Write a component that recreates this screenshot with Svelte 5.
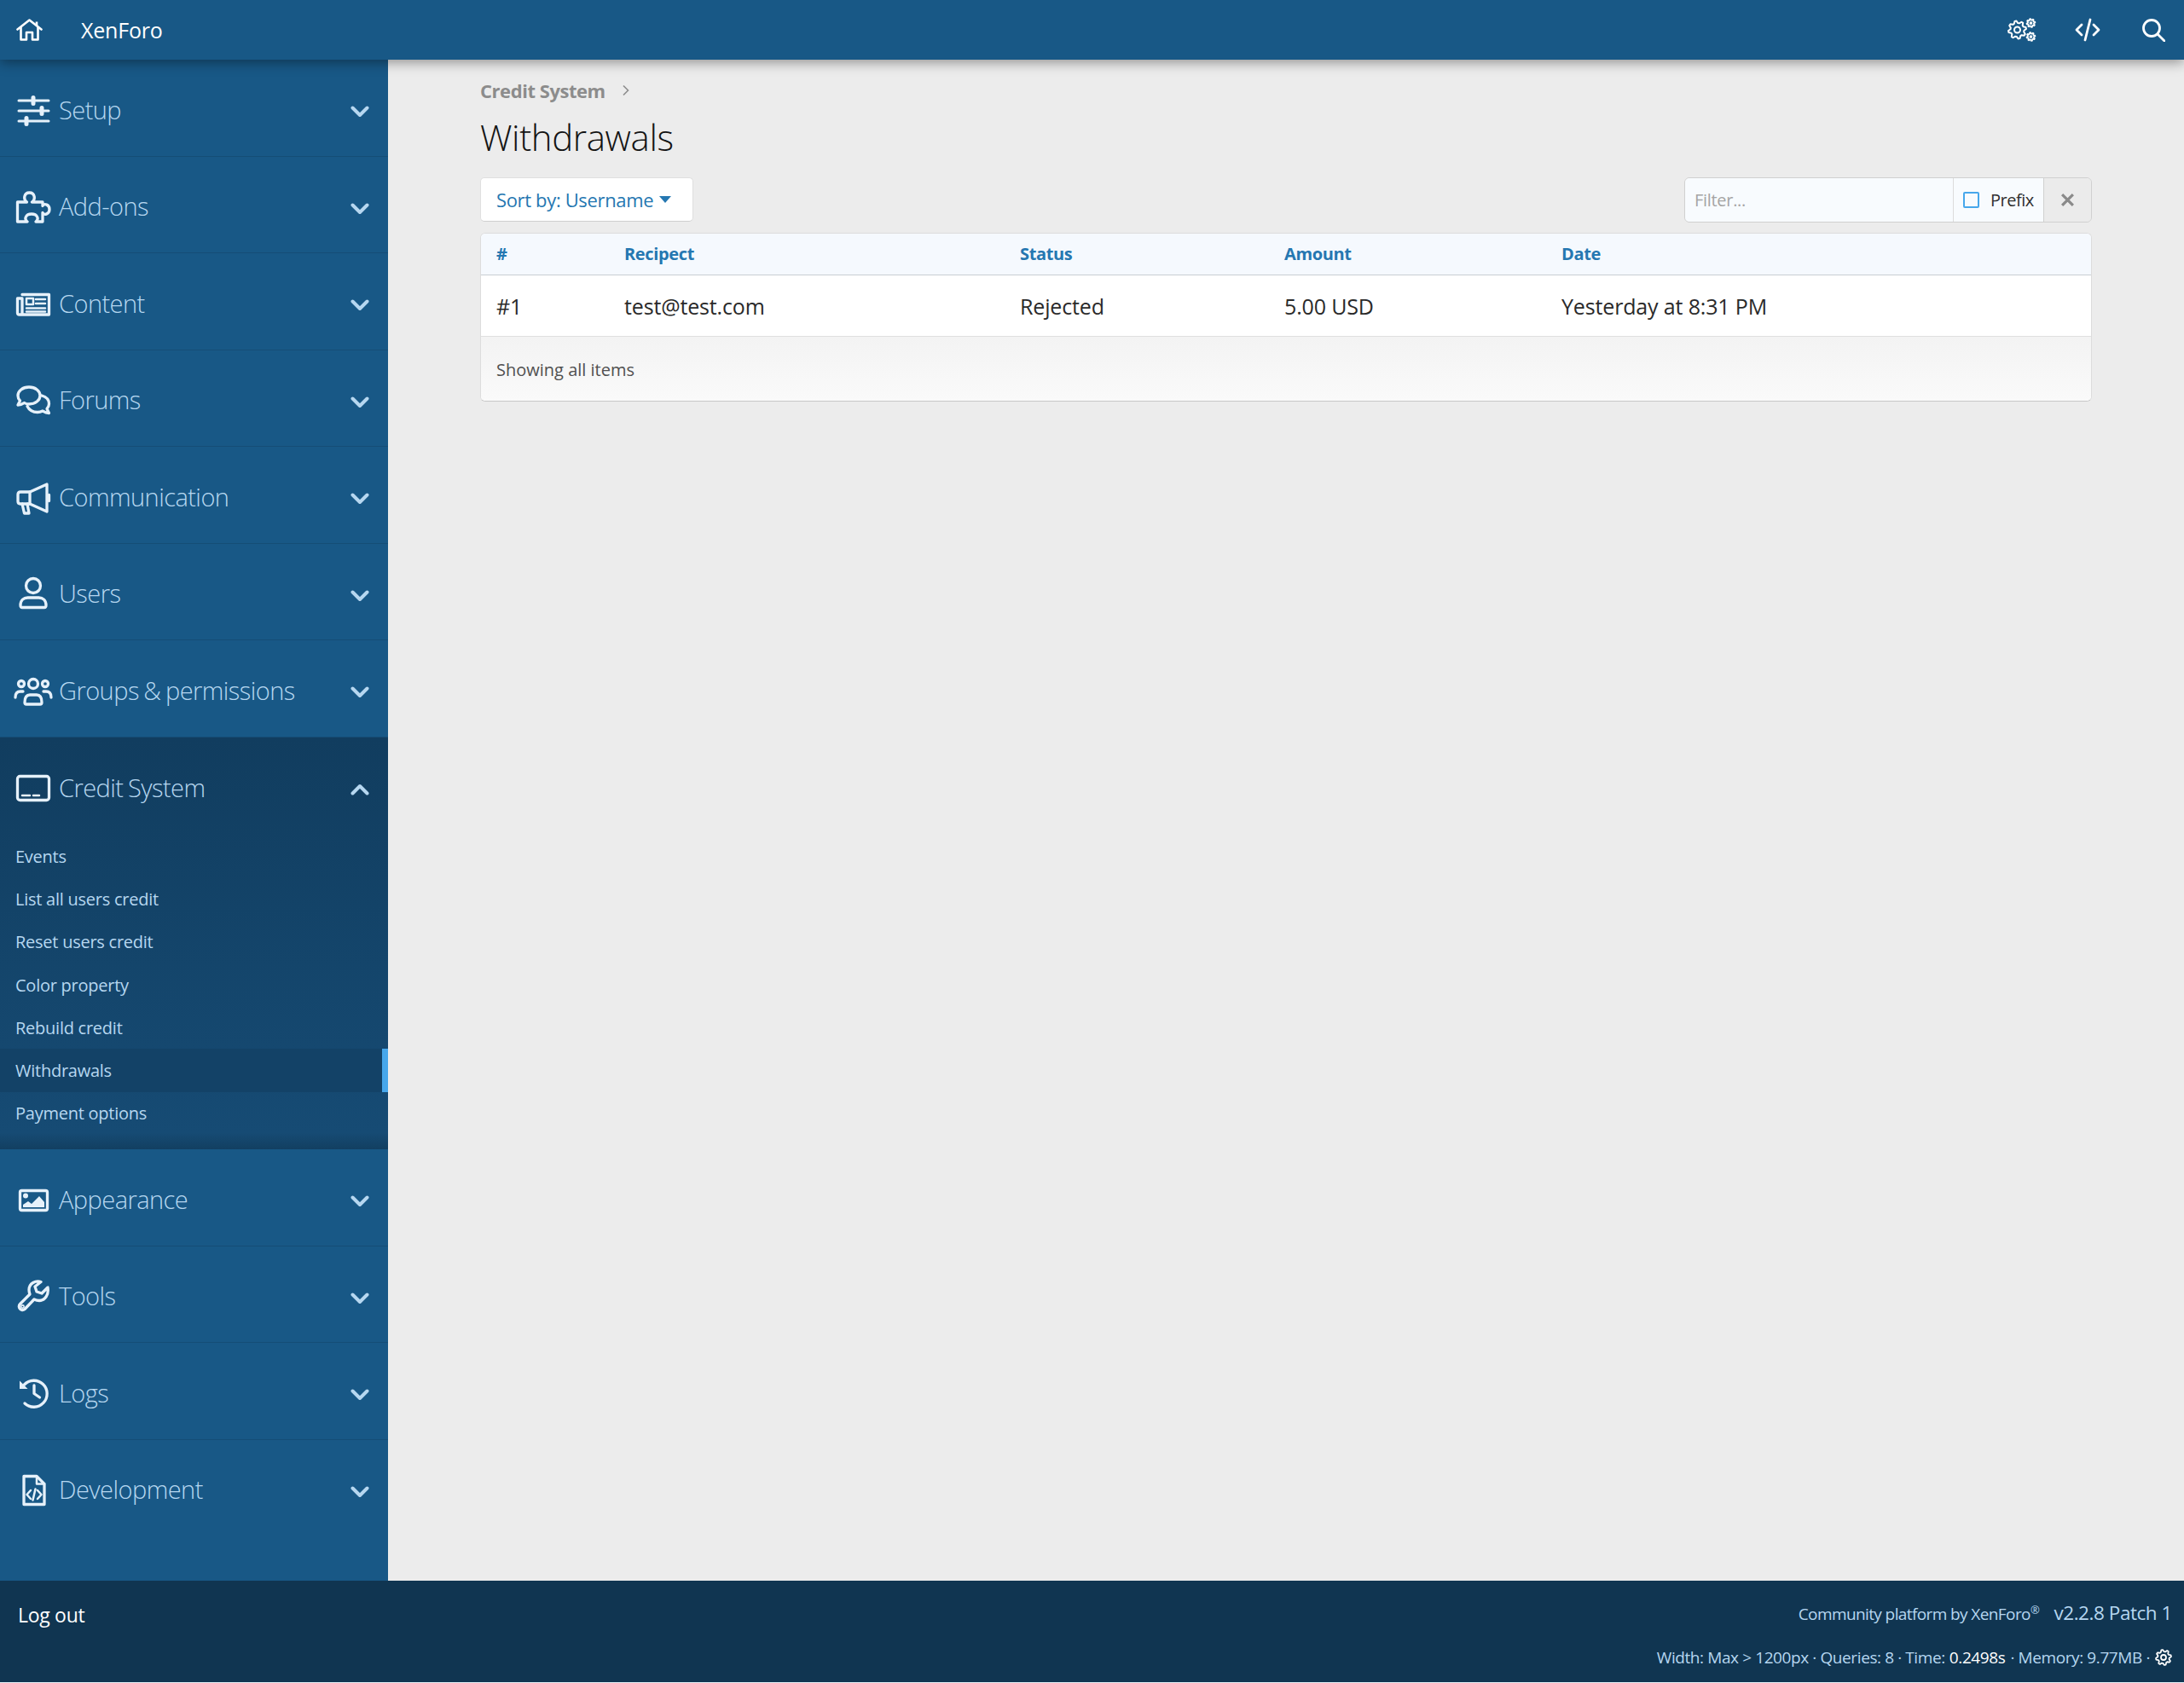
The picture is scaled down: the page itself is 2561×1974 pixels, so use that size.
<script>
  const nav = [
    { label: "Setup", icon: `<path d="M3 8H38M3 20H38M3 32H38" stroke-width="3"/><path d="M20 4.500V11.500M30 16.500V23.500M12 28.500V35.500" stroke-width="5"/>` },
    { label: "Add-ons", icon: `<path d="M1.500 14H12.500C8 11 9 3 15.500 3C22 3 23 11 18.500 14H31V18.500C33 15 39 17 39 22.500C39 28 33 30 31 26.500V37H23C27 34 25 28 18 28C11 28 9 34 13 37H1.500Z"/>` },
    { label: "Content", icon: `<path d="M7 8.500H38.500V32H3.500Q1.500 32 1.500 30V13H7V31"/><path d="M12 13H20V20H12Z" stroke-width="2.500"/><path d="M23 14H34M23 19H34M12 24.500H34M12 28.500H34" stroke-width="2.500"/>` },
    { label: "Forums", icon: `<path d="M15 4C7.500 4 2 8.500 2 14C2 16.500 3 18.500 4.500 20L2 25C6 25 8 23.500 9.500 22.500C11 23.500 13 24 15 24C22.500 24 28 19.500 28 14C28 8.500 22.500 4 15 4Z"/><path d="M30 14C35 15.500 38.500 19 38.500 23.500C38.500 26 37.500 28 36 29.500L38.500 34.500C34.500 34.500 32.500 33 31 32C29 33 27 33.500 25 33.500C19.500 33.500 15 30.500 13 26.500"/>` },
    { label: "Communication", icon: `<path d="M16 13H5Q2 13 2 16V24Q2 27 5 27H16L36 36V4Z"/><path d="M16 13V27M38.500 16.500V23.500"/><path d="M7 27L9.500 38H15L13 27"/>` },
    { label: "Users", icon: `<circle cx="20" cy="10" r="8.500"/><path d="M5 33C5 27 9 24 13.500 24H26.500C31 24 35 27 35 33Q35 35.500 33 35.500H7Q5 35.500 5 33Z"/>` },
    { label: "Groups & permissions", icon: `<circle cx="20" cy="11" r="5.500"/><circle cx="6" cy="11" r="3.500"/><circle cx="34" cy="11" r="3.500"/><path d="M10 33C10 27 12 24 16 24H24C28 24 30 27 30 33Q30 35 28 35H12Q10 35 10 33Z"/><path d="M-1 27C-1 22 1 20 5 20H8M41 27C41 22 39 20 35 20H32"/>` },
    {
      label: "Credit System",
      icon: `<rect x="1.500" y="5.500" width="37" height="28" rx="3"/><path d="M7 28H16M20 28H27" stroke-width="2.500"/>`,
      open: true,
      children: ["Events", "List all users credit", "Reset users credit", "Color property", "Rebuild credit", "Withdrawals", "Payment options"],
    },
    { label: "Appearance", icon: `<rect x="4.500" y="8.500" width="32" height="23" rx="2"/><circle cx="11" cy="14.500" r="3" fill="currentColor" stroke="none"/><path d="M8 28V25L14 21L18 24L27 15L33 22V28Z" fill="currentColor" stroke="none"/>` },
    { label: "Tools", icon: `<path d="M37 9L30 16L24 14L22 8L29 2.500C23 0.500 15 4 15 12C15 14 15.500 15.500 16 17L4.500 28.500C1 32 6 38 10 34.500L21 23C23 24 25 24.500 27 24.500C34 24.500 38.500 17 37 9Z"/><circle cx="7.500" cy="31.500" r="0.800"/>` },
    { label: "Logs", icon: `<path d="M9.500 9A15.500 15.500 0 1 1 10 31"/><path d="M4 4.500V14H13.500Z" fill="currentColor" stroke="none"/><path d="M21 10V19.500L27.500 24"/>` },
    { label: "Development", icon: `<path d="M9 3.500H24L33 12.500V36.500H9Z"/><path d="M24 3.500V12.500H33" stroke-width="2.500"/><path d="M17 20L12.500 25L17 30M25 20L29.500 25L25 30M22.500 18.500L19.500 31.500" stroke-width="2.500"/>` },
  ];

  const columns = [
    { label: "#", value: "#1" },
    { label: "Recipect", value: "test@test.com" },
    { label: "Status", value: "Rejected" },
    { label: "Amount", value: "5.00 USD" },
    { label: "Date", value: "Yesterday at 8:31 PM" },
  ];

  // outline of a cog with eight teeth
  const cogPath = (cx, cy, outer, inner) => {
    const step = Math.PI / 16;
    let d = "";
    for (let i = 0; i < 32; i++) {
      const r = (i + 1) % 4 < 2 ? outer : inner;
      const a = i * step - step * 0.5;
      d += `${i ? "L" : "M"}${(cx + r * Math.cos(a)).toFixed(2)} ${(cy + r * Math.sin(a)).toFixed(2)}`;
    }
    return d + "Z";
  };
</script>

{#snippet cog(cx, cy, outer, inner, hole, width)}
  <path d={cogPath(cx, cy, outer, inner)} fill="none" stroke="currentColor" stroke-width={width} stroke-linejoin="round" />
  <circle {cx} {cy} r={hole} fill="none" stroke="currentColor" stroke-width={width} />
{/snippet}

<div class="page">
  <header class="topbar">
    <svg class="home" viewBox="0 0 32 26" fill="none" stroke="currentColor" stroke-width="2.600" stroke-linejoin="round">
      <path d="M1.500 12.500L15.500 1.500L29.500 12.500" stroke-linecap="round" />
      <path d="M5.500 10V24.500H12V16H19V24.500H25.500V10" />
      <path d="M24 3.500V8" />
    </svg>
    <span class="brand">XenForo</span>
    <div class="top-actions">
      <svg class="cogs" viewBox="0 0 34 28">
        {@render cog(11.500, 14, 10.500, 8, 3.500, 2)}
        {@render cog(27.500, 6, 5, 3.500, 1, 1.700)}
        {@render cog(27.500, 22, 5, 3.500, 1, 1.700)}
      </svg>
      <svg class="code" viewBox="0 0 30 28" fill="none" stroke="currentColor" stroke-width="2.800" stroke-linecap="round" stroke-linejoin="round">
        <path d="M8 8L2 14L8 20M22 8L28 14L22 20M18 2L12 26" />
      </svg>
      <svg class="search" viewBox="0 0 27 27" fill="none" stroke="currentColor" stroke-width="2.800" stroke-linecap="round">
        <circle cx="11" cy="11" r="9.500" />
        <path d="M18 18L26 26" />
      </svg>
    </div>
  </header>

  <div class="middle">
    <aside class="sidebar">
      {#each nav as item}
        <section class="nav-block" class:open={item.open}>
          <div class="nav-item">
            <svg class="nav-icon" viewBox="0 0 40 40" fill="none" stroke="currentColor" stroke-width="3.300" stroke-linejoin="round" stroke-linecap="round">
              {@html item.icon}
            </svg>
            <span class="nav-label">{item.label}</span>
            <svg class="chevron" viewBox="0 0 22 14" fill="none" stroke="currentColor" stroke-width="4" stroke-linecap="round" stroke-linejoin="round">
              <path d={item.open ? "M2.500 11.500L11 3L19.500 11.500" : "M2.500 2.500L11 11L19.500 2.500"} />
            </svg>
          </div>
          {#if item.children}
            <ul class="sub">
              {#each item.children as child}
                <li class:active={child === "Withdrawals"}>{child}</li>
              {/each}
            </ul>
          {/if}
        </section>
      {/each}
    </aside>

    <main class="content">
      <div class="crumb">
        <span>Credit System</span>
        <svg viewBox="0 0 8 14" fill="none" stroke="currentColor" stroke-width="1.600"><path d="M1 1.500L6.500 7L1 12.500" /></svg>
      </div>
      <h1>Withdrawals</h1>

      <div class="toolbar">
        <button class="sort">Sort by: Username <span class="caret"></span></button>
        <div class="filter">
          <span class="filter-input">Filter...</span>
          <span class="prefix"><span class="check"></span>Prefix</span>
          <span class="clear">
            <svg viewBox="0 0 16 16" fill="none" stroke="currentColor" stroke-width="3"><path d="M2 2L14 14M14 2L2 14" /></svg>
          </span>
        </div>
      </div>

      <div class="table">
        <div class="row head">
          {#each columns as col}
            <div class="cell">{col.label}</div>
          {/each}
        </div>
        <div class="row body">
          {#each columns as col}
            <div class="cell">{col.value}</div>
          {/each}
        </div>
        <div class="table-foot">Showing all items</div>
      </div>
    </main>
  </div>

  <footer class="footer">
    <span class="logout">Log out</span>
    <div class="footer-right">
      <div class="copyright">
        <span>Community platform by XenForo<sup>®</sup></span>
        <span class="version">v2.2.8 Patch 1</span>
      </div>
      <div class="debug">
        Width: Max &gt; 1200px · Queries: 8 · Time: <b>0.2498s</b> · Memory: 9.77MB ·
        <svg viewBox="0 0 20 20">{@render cog(10, 10, 9, 6.800, 3, 1.800)}</svg>
      </div>
    </div>
  </footer>
</div>

<style>
  :global(body) {
    margin: 0;
    background: #ececec;
  }

  .page {
    height: 1974px;
    display: flex;
    flex-direction: column;
    font-family: "Open Sans", "Liberation Sans", sans-serif;
    color: #141414;
    overflow: hidden;
  }

  .topbar {
    flex: 0 0 70px;
    position: relative;
    z-index: 2;
    display: flex;
    align-items: center;
    background: #185886;
    color: #fff;
    box-shadow: 0 3px 14px rgba(0, 0, 0, 0.4);
  }

  .home {
    width: 32px;
    height: 26px;
    margin-left: 19px;
  }

  .brand {
    margin-left: 44px;
    font-size: 25px;
    letter-spacing: -0.2px;
  }

  .top-actions {
    margin-left: auto;
    display: flex;
    align-items: center;
    padding-right: 22px;
  }

  .cogs {
    width: 34px;
    height: 28px;
  }

  .code {
    width: 30px;
    height: 28px;
    margin-left: 45px;
  }

  .search {
    width: 27px;
    height: 27px;
    margin-left: 49px;
  }

  .middle {
    flex: 1;
    display: flex;
    min-height: 0;
  }

  .sidebar {
    flex: 0 0 455px;
    background: #185886;
  }

  .nav-block {
    border-bottom: 1px solid #154d76;
  }

  .nav-block:last-child {
    border-bottom: 0;
  }

  .nav-block.open {
    background: linear-gradient(#113d5f, #164b74 96%, #123f61);
    border-bottom: 0;
    padding-bottom: 17px;
  }

  .nav-item {
    height: 105.500px;
    padding: 7px 22px 0 19px;
    display: flex;
    align-items: center;
  }

  .open .nav-item {
    height: 106.500px;
  }

  .nav-icon {
    flex: none;
    width: 40px;
    height: 40px;
    color: #e6f1fa;
    overflow: visible;
  }

  .nav-label {
    margin: -3px 0 0 10px;
    font-size: 29px;
    font-weight: 300;
    color: #b6d7f0;
    letter-spacing: -0.55px;
    word-spacing: -1.500px;
  }

  .chevron {
    margin: 3px 0 0 auto;
    width: 22px;
    height: 14px;
    color: #b6d7f0;
  }

  .sub {
    list-style: none;
    margin: 0;
    padding: 1px 0 0;
  }

  .sub li {
    height: 50.300px;
    display: flex;
    align-items: center;
    padding-left: 18px;
    font-size: 20px;
    color: #b6d7f0;
    letter-spacing: -0.25px;
  }

  .sub li.active {
    background: #134267;
    box-shadow: inset -7px 0 0 #47a7eb;
  }

  .content {
    flex: 1;
    min-width: 0;
    padding: 20px 108px 0 108px;
  }

  .crumb {
    display: flex;
    align-items: center;
    gap: 20px;
    height: 32px;
    font-size: 22px;
    font-weight: 700;
    color: #8c8c8c;
    letter-spacing: -0.45px;
  }

  .crumb svg {
    width: 8px;
    height: 14px;
  }

  h1 {
    margin: 14px 0 0;
    font-size: 42px;
    line-height: 50px;
    font-weight: 300;
    color: #141414;
    letter-spacing: -0.4px;
  }

  .toolbar {
    margin-top: 22px;
    display: flex;
    justify-content: space-between;
    align-items: flex-start;
  }

  .sort {
    height: 52px;
    width: 250px;
    padding: 0 0 0 18px;
    display: flex;
    align-items: center;
    gap: 7px;
    background: #fff;
    border: 1px solid #dfdfdf;
    border-bottom-color: #cfcfcf;
    border-radius: 5px;
    font: inherit;
    font-size: 22px;
    color: #2577b1;
    letter-spacing: -0.35px;
  }

  .caret {
    width: 0;
    height: 0;
    border: 7px solid transparent;
    border-top: 8px solid #2577b1;
    border-bottom: 0;
  }

  .filter {
    width: 478px;
    height: 53px;
    box-sizing: border-box;
    display: flex;
    border: 1px solid #d0d0d0;
    border-radius: 6px;
    overflow: hidden;
    font-size: 20px;
  }

  .filter-input {
    flex: 1;
    padding-left: 11px;
    display: flex;
    align-items: center;
    background: #f8fbfe;
    color: #a5a5a5;
    letter-spacing: -0.3px;
  }

  .prefix {
    flex: 0 0 107px;
    display: flex;
    align-items: center;
    gap: 13px;
    padding-left: 11px;
    box-sizing: border-box;
    background: #f8fbfe;
    border-left: 1px solid #dcdcdc;
    border-right: 1px solid #d0d0d0;
    color: #303030;
    letter-spacing: -0.5px;
  }

  .check {
    flex: none;
    width: 15px;
    height: 15px;
    border: 2px solid #47a7eb;
    border-radius: 2px;
  }

  .clear {
    flex: 0 0 55px;
    display: flex;
    align-items: center;
    justify-content: center;
    background: #ebebeb;
    color: #8a8a8a;
  }

  .clear svg {
    width: 17px;
    height: 17px;
  }

  .table {
    margin-top: 12px;
    background: #fff;
    border: 1px solid #dcdcdc;
    border-bottom-color: #c8c8c8;
    border-radius: 6px;
    overflow: hidden;
  }

  .row {
    display: grid;
    grid-template-columns: 150px 464px 310px 325px 1fr;
  }

  .cell {
    padding: 0 18px;
    display: flex;
    align-items: center;
  }

  .head {
    height: 48px;
    background: #f5f9fe;
    border-bottom: 1px solid #c9ced2;
    font-size: 20px;
    font-weight: 700;
    color: #2577b1;
    letter-spacing: -0.35px;
  }

  .head .cell {
    padding-bottom: 2px;
  }

  .body {
    height: 71px;
    border-bottom: 1px solid #dfdfdf;
    font-size: 25px;
    color: #2a2a2a;
    letter-spacing: -0.15px;
  }

  .table-foot {
    height: 73px;
    padding: 2px 0 0 18px;
    display: flex;
    align-items: center;
    background: linear-gradient(#f3f3f3, #fafafa);
    font-size: 20px;
    color: #505050;
  }

  .footer {
    flex: 0 0 119px;
    display: flex;
    justify-content: space-between;
    background: #103551;
    color: #b6d7f0;
    border-bottom: 1px solid #e8f2f8;
  }

  .logout {
    margin: 24px 0 0 21px;
    font-size: 23px;
    color: #fff;
    letter-spacing: -0.3px;
  }

  .footer-right {
    padding: 22px 14px 0 0;
    text-align: right;
  }

  .copyright {
    font-size: 19px;
    letter-spacing: -0.6px;
  }

  .copyright sup {
    font-size: 13px;
    line-height: 0;
  }

  .version {
    margin-left: 13px;
    font-size: 22.500px;
    letter-spacing: -0.45px;
  }

  .debug {
    margin-top: 24px;
    display: flex;
    justify-content: flex-end;
    align-items: center;
    gap: 6px;
    font-size: 19px;
    letter-spacing: -0.4px;
  }

  .debug b {
    margin: 0 0 0 -1px;
    font-weight: 400;
    color: #fff;
  }

  .debug svg {
    width: 20px;
    height: 20px;
    color: #fff;
  }
</style>
